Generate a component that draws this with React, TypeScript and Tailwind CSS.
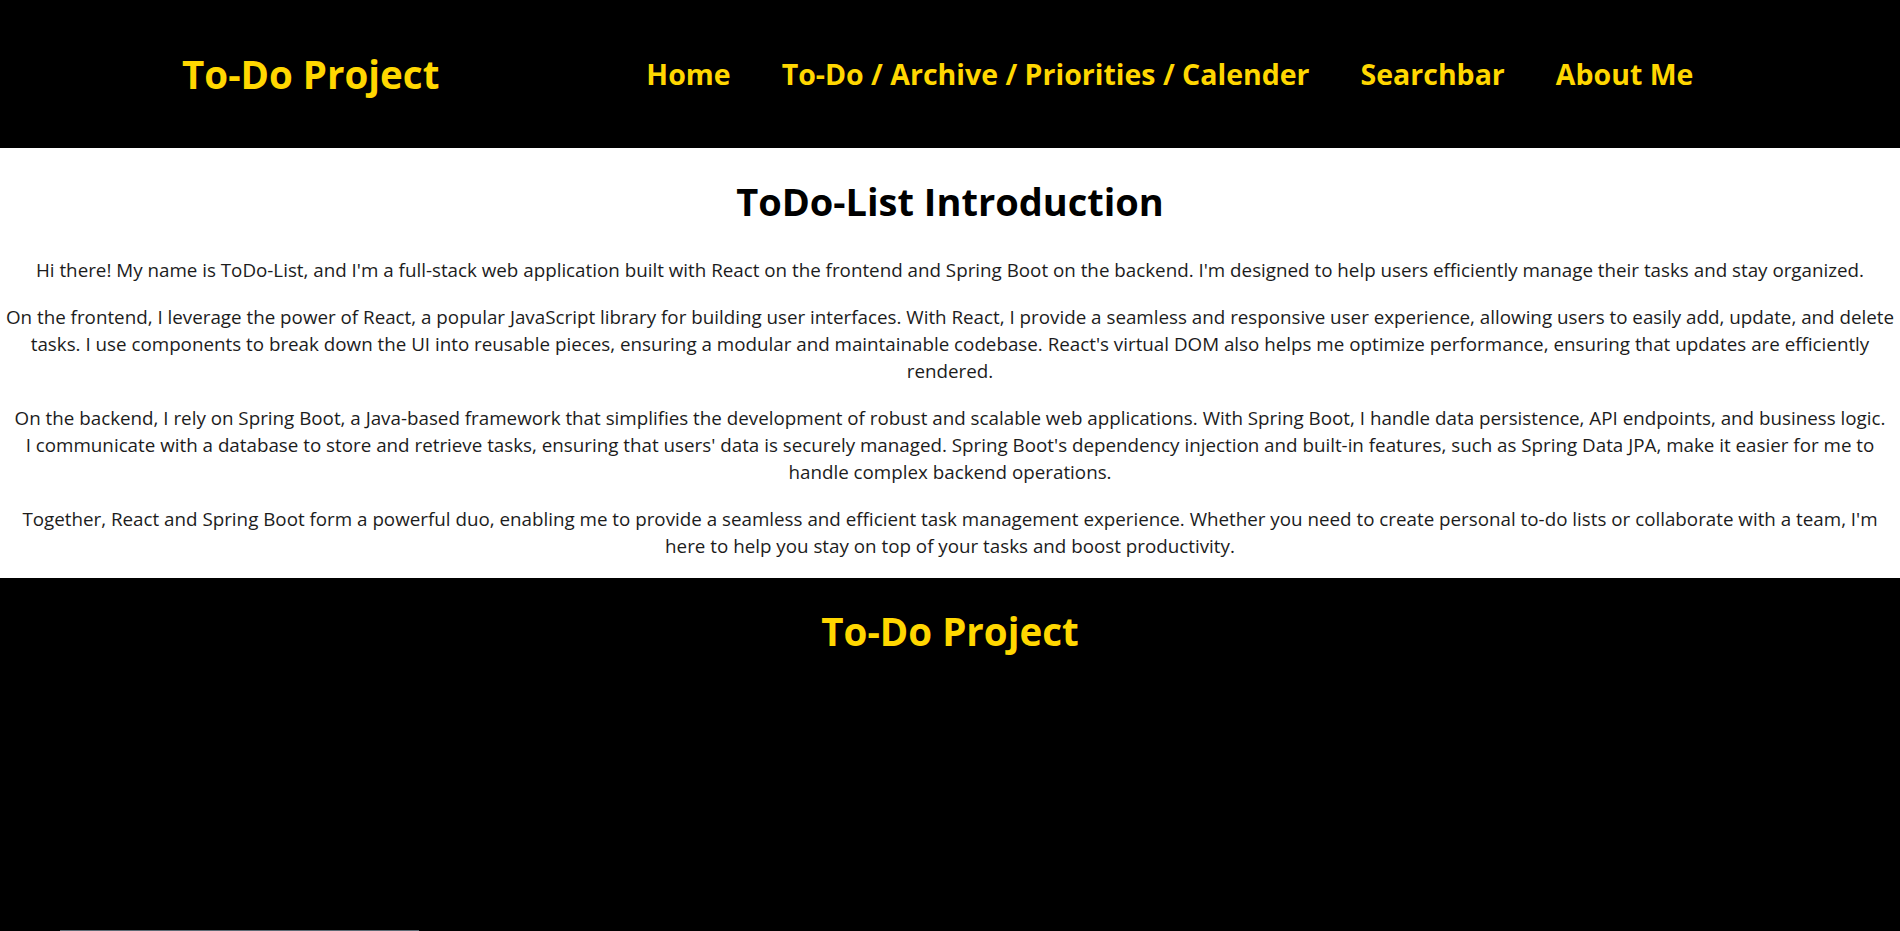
const navLinks = ['Home', 'To-Do / Archive / Priorities / Calender', 'Searchbar', 'About Me'];

const paragraphs: string[][] = [
  [
    "Hi there! My name is ToDo-List, and I'm a full-stack web application built with React on the frontend and Spring Boot on the backend. I'm designed to help users efficiently manage their tasks and stay organized.",
  ],
  [
    'On the frontend, I leverage the power of React, a popular JavaScript library for building user interfaces. With React, I provide a seamless and responsive user experience, allowing users to easily add, update, and delete',
    "tasks. I use components to break down the UI into reusable pieces, ensuring a modular and maintainable codebase. React's virtual DOM also helps me optimize performance, ensuring that updates are efficiently",
    'rendered.',
  ],
  [
    'On the backend, I rely on Spring Boot, a Java-based framework that simplifies the development of robust and scalable web applications. With Spring Boot, I handle data persistence, API endpoints, and business logic.',
    "I communicate with a database to store and retrieve tasks, ensuring that users' data is securely managed. Spring Boot's dependency injection and built-in features, such as Spring Data JPA, make it easier for me to",
    'handle complex backend operations.',
  ],
  [
    "Together, React and Spring Boot form a powerful duo, enabling me to provide a seamless and efficient task management experience. Whether you need to create personal to-do lists or collaborate with a team, I'm",
    'here to help you stay on top of your tasks and boost productivity.',
  ],
];

export default function App() {
  return (
    <div className="min-h-screen overflow-x-hidden bg-black font-['Open_Sans','Noto_Sans',sans-serif]">
      <header className="flex h-[148px] items-center bg-black pl-[182px]">
        <h1 className="text-[38.5px] font-bold leading-none text-[#ffd700]">To-Do Project</h1>
        <nav className="ml-[207px] flex items-center gap-[51px]">
          {navLinks.map((link) => (
            <a key={link} href="#" className="text-[28.5px] font-bold leading-none text-[#ffd700]">
              {link}
            </a>
          ))}
        </nav>
      </header>

      <main className="bg-white pb-[18px] pt-[34px] text-center">
        <h2 className="text-[38px] font-bold leading-none text-black">ToDo-List Introduction</h2>
        <div className="mt-[37px] flex flex-col gap-[20px] text-[18.8px] leading-[27px] text-[#1c1c1c]">
          {paragraphs.map((lines, i) => (
            <p key={i} className="whitespace-nowrap">
              {lines.map((line, j) => (
                <span key={j}>
                  {line}
                  {j < lines.length - 1 && <br />}
                </span>
              ))}
            </p>
          ))}
        </div>
      </main>

      <footer className="bg-black pt-[34px] text-center">
        <h2 className="text-[38.5px] font-bold leading-none text-[#ffd700]">To-Do Project</h2>
        <div className="ml-[60px] mt-[279px] h-px w-[359px] bg-[#5f6b75]" />
      </footer>
    </div>
  );
}
